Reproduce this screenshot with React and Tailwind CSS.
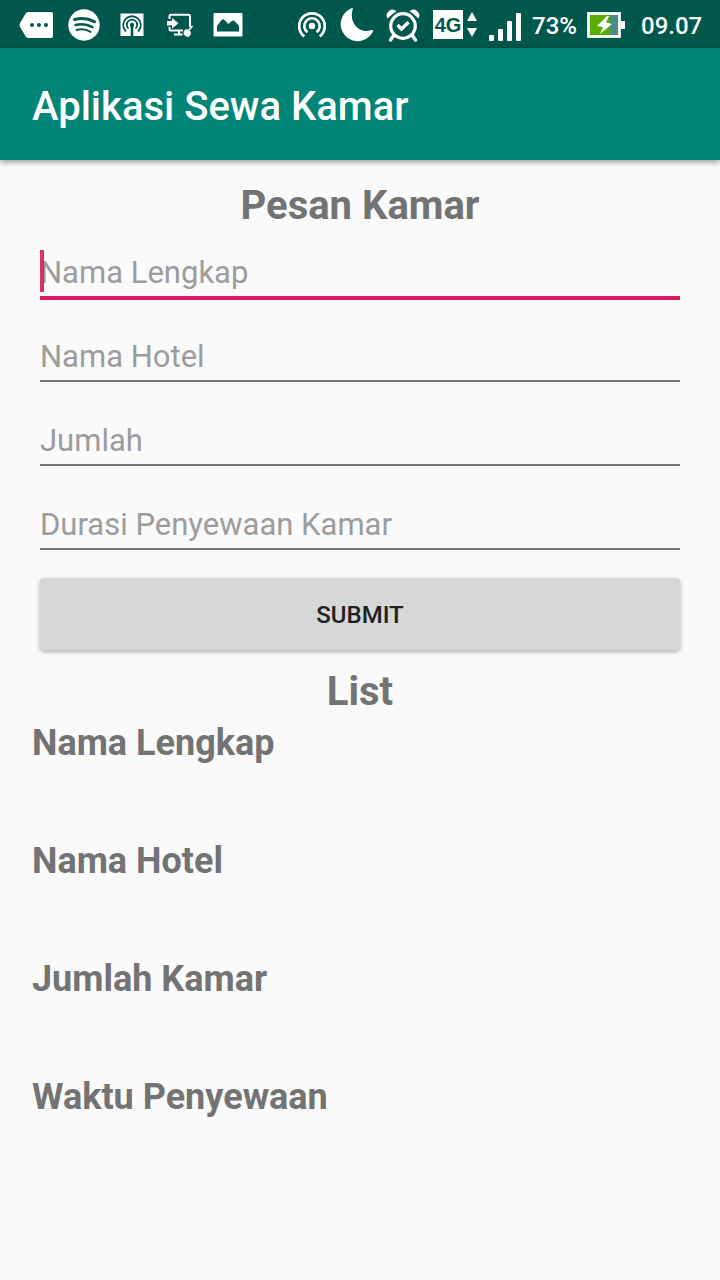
import React from "react";

const fields = [
  { id: "nama-lengkap", label: "Nama Lengkap", active: true },
  { id: "nama-hotel", label: "Nama Hotel" },
  { id: "jumlah", label: "Jumlah" },
  { id: "durasi", label: "Durasi Penyewaan Kamar" },
];

const results = ["Nama Lengkap", "Nama Hotel", "Jumlah Kamar", "Waktu Penyewaan"];

function Icon({ width, className = "", children }) {
  return (
    <svg
      aria-hidden="true"
      width={width}
      height="48"
      viewBox={`0 0 ${width} 48`}
      fill="none"
      stroke="none"
      className={`shrink-0 ${className}`}
    >
      {children}
    </svg>
  );
}

function StatusBar() {
  return (
    <div className="flex h-12 items-center justify-between bg-[#00574b] pl-[19px] pr-4 text-white">
      <div className="flex items-center">
        <Icon width={34}>
          <path d="M9 12H32Q34 12 34 14V36Q34 38 32 38H9Q8 38 7 37L1 27Q0 25 1 23L7 13Q8 12 9 12Z" fill="#fff" />
          <g fill="#00574b">
            <circle cx="13" cy="25" r="2" />
            <circle cx="20" cy="25" r="2" />
            <circle cx="27" cy="25" r="2" />
          </g>
        </Icon>
        <Icon width={32} className="ml-[15px]">
          <circle cx="16" cy="25" r="15.7" fill="#fff" />
          <g stroke="#00574b" strokeLinecap="round">
            <path d="M6.5 19.5C13 17.8 20.500 18.500 26.500 21.700" strokeWidth="3" />
            <path d="M7.500 25C13 23.600 19.500 24.300 24.500 27.200" strokeWidth="2.500" />
            <path d="M8.500 30C13 28.900 18.500 29.400 22.500 31.800" strokeWidth="2" />
          </g>
        </Icon>
        <Icon width={24} className="ml-5">
          <rect x="0.500" y="13.500" width="23" height="22.500" fill="#fff" />
          <g stroke="#00574b" strokeWidth="1.800">
            <path d="M6 31.500A8.800 8.800 0 1 1 18 31.500" />
            <path d="M8.500 28.700A5.200 5.200 0 1 1 15.500 28.700" />
            <path d="M12 25V36" strokeWidth="2.600" />
          </g>
          <circle cx="12" cy="25" r="2.200" fill="#00574b" />
        </Icon>
        <Icon width={28} className="ml-[22px]">
          <path d="M3.500 19V16Q3.500 14.700 5 14.700H22.500Q24 14.700 24 16V27M3.500 27V29Q3.500 30.500 5 30.500H17" stroke="#fff" strokeWidth="2" />
          <path d="M1 21H6V18L12.500 23.200L6 28.500V25.500H1Z" fill="#fff" />
          <path d="M13 31V34M8 34.500H16.500" stroke="#fff" strokeWidth="2" />
          <path d="M26.500 26L22 31" stroke="#fff" strokeWidth="1.600" />
          <path d="M18.500 30Q22 28 25 32Q25 36 22 37Q18 36 17.500 33Z" fill="#fff" />
        </Icon>
        <Icon width={30} className="ml-[19px]">
          <rect x="0.500" y="13" width="29" height="23.500" rx="0.800" fill="#fff" />
          <path d="M4 31.500V26L8.500 20Q10 18.500 11.500 20L15.500 24L19 20.800Q20.500 20 22 21.500L26 26V31.500Z" fill="#00574b" />
        </Icon>
      </div>
      <div className="flex items-center">
        <Icon width={28}>
          <g stroke="#fff" strokeWidth="2.700">
            <path d="M6.300 36.300A12.800 12.800 0 1 1 21.700 36.300" />
            <path d="M9.500 32.200A7.700 7.700 0 1 1 18.500 32.200" />
          </g>
          <circle cx="14" cy="26" r="3.300" fill="#fff" />
        </Icon>
        <Icon width={34} className="ml-[14px]">
          <path d="M11.500 8.300A17 17 0 1 0 33 31.500C33.500 30.300 33 29.700 31.500 30C19 34.500 8.500 22 12.700 9.500C13 8.300 12.500 7.800 11.500 8.300Z" fill="#fff" />
        </Icon>
        <Icon width={34} className="ml-3">
          <circle cx="17" cy="26" r="12.300" stroke="#fff" strokeWidth="3.200" />
          <path d="M8 35L4.500 40M26 35L29.500 40" stroke="#fff" strokeWidth="3.400" strokeLinecap="round" />
          <path d="M1.500 18.500Q-1 14 3 11Q6.500 8 10.500 11.300Q6 14 1.500 18.500ZM32.500 18.500Q35 14 31 11Q27.500 8 23.500 11.300Q28 14 32.500 18.500Z" fill="#fff" />
          <path d="M11.500 25L15.500 29L22.500 22.300" stroke="#fff" strokeWidth="3.400" />
        </Icon>
        <span className="ml-[13px] flex h-[29px] w-[30px] shrink-0 items-center justify-center bg-white pt-0.5 font-['Liberation_Sans',sans-serif] text-[20px] font-bold leading-none text-[#00574b]">
          4G
        </span>
        <Icon width={10} className="ml-1">
          <path d="M5 12L10 21H0ZM5 37L10 28H0Z" fill="#fff" />
        </Icon>
        <Icon width={33} className="ml-3">
          <g fill="#fff">
            <rect x="0" y="35" width="5" height="6" rx="1" />
            <rect x="9" y="29" width="5" height="12" rx="1" />
            <rect x="18" y="21" width="5" height="20" rx="1" />
            <rect x="27" y="13" width="5" height="28" rx="1" />
          </g>
        </Icon>
        <span className="ml-2.5 w-[46px] pt-1 text-2xl font-medium">73%</span>
        <Icon width={39} className="ml-[9px]">
          <rect x="1.500" y="13.500" width="31" height="23" fill="#4c8c82" stroke="#fff" strokeWidth="2.800" />
          <rect x="3" y="15" width="20" height="20" fill="#58ad00" />
          <rect x="34" y="21" width="4" height="8" fill="#fff" />
          <path d="M20 16L10 26L16 27L13 34L25 24L19 22.500L22 16Z" fill="#fff" />
        </Icon>
        <span className="ml-[15px] w-[63px] pt-1 text-2xl font-medium">09.07</span>
      </div>
    </div>
  );
}

function Field({ id, label, active }) {
  return (
    <div className="relative h-[50px]">
      <input
        id={id}
        type="text"
        aria-label={label}
        placeholder={label}
        className={`block w-full rounded-none bg-transparent pb-0.5 text-[31px] text-[#212121] caret-[#d81b60] outline-none placeholder:text-[#9c9c9c] ${
          active ? "h-[50px] border-b-4 border-[#d81b60]" : "h-12 border-b-2 border-[#757575]"
        }`}
      />
      {active && <span aria-hidden="true" className="absolute left-0 top-0 h-[42px] w-1 bg-[#d81b60]/90" />}
    </div>
  );
}

export default function App() {
  return (
    <div className="min-h-screen bg-[#fafafa] font-['Roboto',sans-serif] text-[#737373]">
      <StatusBar />
      <header className="flex h-28 items-center bg-[#008577] px-8 pt-1.5 shadow-[0_2px_6px_rgba(0,0,0,0.4)]">
        <h1 className="text-[40px] font-medium leading-[48px] text-white">Aplikasi Sewa Kamar</h1>
      </header>
      <main className="px-8 pt-[22px]">
        <h2 className="text-center text-[40px] font-bold leading-[48px]">Pesan Kamar</h2>
        <form className="px-2 pt-5" onSubmit={(e) => e.preventDefault()}>
          <div className="flex flex-col gap-[34px]">
            {fields.map((f) => (
              <Field key={f.id} {...f} />
            ))}
          </div>
          <button
            type="submit"
            className="mt-[26px] h-[72px] w-full rounded bg-[#d6d8d7] pt-0.5 text-2xl font-medium text-[#212121] shadow-[0_2px_4px_rgba(0,0,0,0.3)]"
          >
            SUBMIT
          </button>
        </form>
        <h2 className="mt-[18px] text-center text-[40px] font-bold leading-[48px]">List</h2>
        <ul className="mt-[3px]">
          {results.map((r) => (
            <li key={r} className="h-[118px] text-4xl font-bold leading-[48px]">
              {r}
            </li>
          ))}
        </ul>
      </main>
    </div>
  );
}
